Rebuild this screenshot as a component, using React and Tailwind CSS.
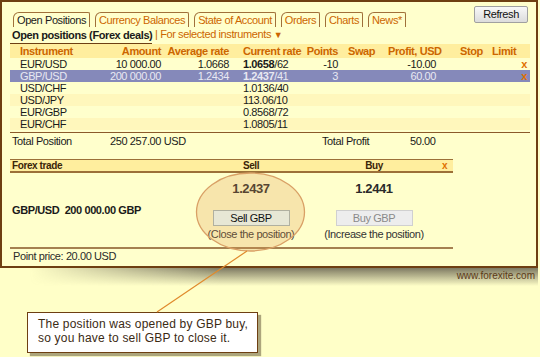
import React from 'react';

// Forex trading terminal tutorial frame: open positions panel + callout
const tabs = ['Open Positions', 'Currency Balances', 'State of Account', 'Orders', 'Charts', 'News*'];

const rows = [
  { sym: 'EUR/USD', amount: '10 000.00', avg: '1.0668', bid: '1.0658', ask: '/62', bold: true, points: '-10', profit: '-10.00', close: true },
  { sym: 'GBP/USD', amount: '200 000.00', avg: '1.2434', bid: '1.2437', ask: '/41', bold: true, points: '3', profit: '60.00', close: true, selected: true },
  { sym: 'USD/CHF', bid: '1.0136', ask: '/40' },
  { sym: 'USD/JPY', bid: '113.06', ask: '/10' },
  { sym: 'EUR/GBP', bid: '0.8568', ask: '/72' },
  { sym: 'EUR/CHF', bid: '1.0805', ask: '/11' },
];

const cols = 'grid grid-cols-[90px_61px_68px_76px_33px_50px_48px_52px_30px_12px]';

const Tab = ({ label, active }) => (
  <div
    className={`h-[15px] leading-[14px] px-[3px] border border-b-0 border-[#A0703A] rounded-tl-[6px] rounded-tr-[2px] ${
      active ? 'text-[#1a1a1a]' : 'text-[#CC6600]'
    }`}
  >
    {label}
  </div>
);

const TradeColumn = ({ price, button, caption, disabled }) => (
  <div className="flex flex-col items-center pt-[8px]">
    <div className="h-[16px] leading-[16px] text-[13px] font-bold text-[#2a2a2a]">{price}</div>
    <button
      className={`relative z-10 mt-[13px] w-[77px] h-[16px] leading-[14px] border ${
        disabled ? 'bg-[#EDEDED] border-[#D0D0D0] text-[#8A8A8A]' : 'bg-[#E7E7D5] border-[#B0B0A0] text-[#111]'
      }`}
    >
      {button}
    </button>
    <div className="mt-[2px] leading-[13px] text-[#333]">{caption}</div>
  </div>
);

export default function App() {
  return (
    <div className="relative w-[540px] h-[357px] overflow-hidden bg-[#FFFFC8] text-[11px] tracking-[-0.4px] text-[#1a1a1a] font-['Liberation_Sans',Arial,sans-serif]">
      {/* main panel */}
      <div className="w-[538px] h-[268px] border-2 border-[#6E3F12] bg-[#FFFFCC] flex flex-col">
        <div className="flex justify-between items-start h-[25px]">
          <div className="flex gap-[5px] mt-[10px] ml-[11px]">
            {tabs.map((t, i) => (
              <Tab key={t} label={t} active={i === 0} />
            ))}
          </div>
          <button className="mt-[4px] mr-[8px] w-[54px] h-[17px] leading-[15px] border border-[#A0A0A0] rounded-[2px] bg-linear-to-b from-[#F8F8F8] to-[#DCDCDC] text-[#111]">
            Refresh
          </button>
        </div>

        <div className="h-[17px] flex items-end pl-[8px]">
          <span className="pl-[2px] leading-[15px] border-b border-[#6E3F12] font-bold">Open positions (Forex deals)</span>
          <span className="leading-[15px] pb-[1px] text-[#CC6600] whitespace-pre"> | For selected instruments <span className="text-[9px]">▼</span></span>
        </div>

        <div className="ml-[8px] w-[520px]">
          <div className={`${cols} h-[14px] leading-[14px] bg-[#FFEE9E] font-bold text-[#CC6600]`}>
            <div className="pl-[10px]">Instrument</div>
            <div className="text-right">Amount</div>
            <div className="text-right">Average rate</div>
            <div className="pl-[14px]">Current rate</div>
            <div className="text-right">Points</div>
            <div className="pl-[10px]">Swap</div>
            <div className="text-right whitespace-nowrap">Profit, USD</div>
            <div className="pl-[24px]">Stop</div>
            <div className="pl-[4px]">Limit</div>
            <div />
          </div>
          {rows.map((r, i) => (
            <div
              key={r.sym}
              className={`${cols} h-[12px] leading-[12px] ${
                r.selected ? 'bg-[#8589BA] text-[#E8E8F2]' : i % 2 ? 'bg-[#FFF7BC]' : ''
              }`}
            >
              <div className="pl-[10px]">{r.sym}</div>
              <div className="text-right">{r.amount}</div>
              <div className="text-right">{r.avg}</div>
              <div className="pl-[14px]">
                <span className={r.bold ? 'font-bold' : ''}>{r.bid}</span>
                {r.ask}
              </div>
              <div className="text-right">{r.points}</div>
              <div />
              <div className="text-right">{r.profit}</div>
              <div />
              <div />
              <div className="text-center font-bold text-[#E07000]">{r.close ? 'x' : ''}</div>
            </div>
          ))}

          <div className="mt-[2px] border-t border-[#8B5A2B] h-[16px] leading-[16px] grid grid-cols-[100px_212px_88px_1fr]">
            <div className="pl-[2px]">Total Position</div>
            <div>250 257.00 USD</div>
            <div>Total Profit</div>
            <div>50.00</div>
          </div>
        </div>

        {/* forex trade box */}
        <div className="mt-[11px] ml-[8px] w-[443px]">
          <div className="h-[14px] border-t border-b-2 border-[#9C7038] bg-[#FFEE9E] grid grid-cols-[180px_122px_124px_17px] leading-[11px] text-[10px] font-bold text-[#3A2408]">
            <div className="pl-[2px]">Forex trade</div>
            <div className="text-center">Sell</div>
            <div className="text-center">Buy</div>
            <div className="text-center text-[#E07000]">x</div>
          </div>
          <div className="h-[74px] grid grid-cols-[180px_122px_124px_17px]">
            <div className="flex items-center pl-[2px] font-bold whitespace-pre">GBP/USD  200 000.00 GBP</div>
            <TradeColumn price="1.2437" button="Sell GBP" caption="(Close the position)" />
            <TradeColumn price="1.2441" button="Buy GBP" caption="(Increase the position)" disabled />
            <div />
          </div>
          <div className="h-[16px] leading-[14px] border-t-2 border-[#A58050] pl-[3px] text-[#2a2a2a]">Point price: 20.00 USD</div>
        </div>
      </div>

      {/* drop shadow under the panel */}
      <div className="absolute left-0 top-[268px] w-[538px] h-[18px] bg-linear-to-b from-[#7E7A62] to-transparent [mask-image:linear-gradient(to_right,transparent_30px,black_220px)]" />

      <div className="relative pt-[2px] pr-[5px] text-right text-[10px] leading-[12px] tracking-normal text-[#5C3A18]">www.forexite.com</div>

      <div className="relative mt-[30px] ml-[27px] w-[231px] h-[41px] bg-white border border-[#6E3F12] shadow-[3px_3px_1px_rgba(70,55,30,0.45)] pl-[10px] pt-[4px] text-[12px] leading-[14px] tracking-[0.2px] text-[#3B2A14]">
        The position was opened by GBP buy,
        <br />
        so you have to sell GBP to close it.
      </div>

      {/* highlight ellipse and pointer */}
      <svg className="absolute left-0 top-0 pointer-events-none" width="540" height="357">
        <ellipse cx="250.5" cy="212" rx="54" ry="39" fill="rgba(222,150,75,0.25)" stroke="#D9A066" strokeWidth="1.3" />
        <line x1="247" y1="251" x2="157" y2="312" stroke="#E08A2C" strokeWidth="1.2" />
      </svg>
    </div>
  );
}
